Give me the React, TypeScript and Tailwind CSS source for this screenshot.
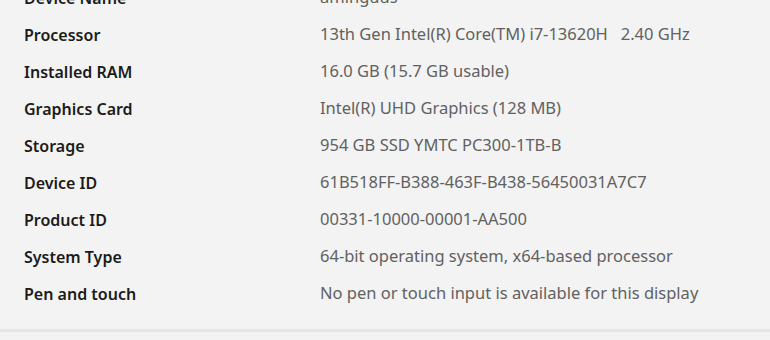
const specs: [string, string][] = [
  ["Device Name", "aminguus"],
  ["Processor", "13th Gen Intel(R) Core(TM) i7-13620H   2.40 GHz"],
  ["Installed RAM", "16.0 GB (15.7 GB usable)"],
  ["Graphics Card", "Intel(R) UHD Graphics (128 MB)"],
  ["Storage", "954 GB SSD YMTC PC300-1TB-B"],
  ["Device ID", "61B518FF-B388-463F-B438-56450031A7C7"],
  ["Product ID", "00331-10000-00001-AA500"],
  ["System Type", "64-bit operating system, x64-based processor"],
  ["Pen and touch", "No pen or touch input is available for this display"],
];

export default function App() {
  return (
    <div className="w-[770px] h-[340px] overflow-hidden bg-[#f3f3f3] font-['Noto_Sans',sans-serif]">
      <div className="-mt-[21px] pb-[17px] border-b-[3px] border-[#e6e6e6]">
        {specs.map(([label, value]) => (
          <div key={label} className="grid grid-cols-[296px_1fr] h-[37px] items-center pl-6">
            <div className="text-[16px] font-semibold text-[#1b1b1b]">{label}</div>
            <div className="text-[16.5px] text-[#616161] whitespace-pre">{value}</div>
          </div>
        ))}
      </div>
    </div>
  );
}
